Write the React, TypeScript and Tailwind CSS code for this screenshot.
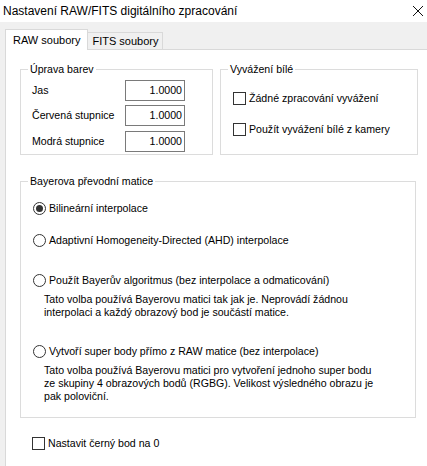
import type { ReactNode } from "react";

const FONT = "font-['Liberation_Sans',Arial,sans-serif]";

function GroupBox({ label, className, children }: { label: string; className: string; children: ReactNode }) {
  return (
    <div className={`relative border border-[#dcdcdc] ${className}`}>
      <span className="absolute -top-[7px] left-[7px] bg-white px-[2px] leading-[13px]">{label}</span>
      {children}
    </div>
  );
}

function CheckBox({ label }: { label: string }) {
  return (
    <div className="flex items-center gap-[3px] h-[13px]">
      <span className="w-[13px] h-[13px] border border-[#333333] bg-white shrink-0" />
      <span className="leading-[13px] whitespace-nowrap">{label}</span>
    </div>
  );
}

function Radio({ label, checked = false }: { label: string; checked?: boolean }) {
  return (
    <div className="flex items-center gap-[3px] h-[13px]">
      <span className="w-[13px] h-[13px] rounded-full border border-[#333333] bg-white shrink-0 flex items-center justify-center">
        {checked && <span className="w-[7px] h-[7px] rounded-full bg-[#333333]" />}
      </span>
      <span className="leading-[13px] whitespace-nowrap">{label}</span>
    </div>
  );
}

function NumField({ label, value, className = "" }: { label: string; value: string; className?: string }) {
  return (
    <div className={`flex items-center h-[21px] ${className}`}>
      <span className="w-[93px] whitespace-nowrap">{label}</span>
      <div className="w-[60px] h-[21px] border border-[#7a7a7a] bg-white flex items-center justify-end pr-[2px]">
        {value}
      </div>
    </div>
  );
}

export default function App() {
  return (
    <div className={`w-[427px] h-[466px] overflow-hidden bg-white text-black text-[11px] flex flex-col ${FONT}`}>
      {/* Title bar */}
      <div className="h-[22px] shrink-0 flex items-center justify-between pl-[3px] pr-[2px] bg-white">
        <span className="text-[12px] leading-[14px] whitespace-nowrap">Nastavení RAW/FITS digitálního zpracování</span>
        <svg width="12" height="12" viewBox="0 0 12 12" className="mr-[1px]">
          <path d="M1 1 L11 11 M11 1 L1 11" stroke="#111" strokeWidth="1" fill="none" />
        </svg>
      </div>

      <div className="flex-1 bg-[#f0f0f0] pt-[6px] flex flex-col">
        {/* Tabs */}
        <div className="flex items-end pl-[5px] h-[21px] shrink-0">
          <div className="relative z-10 h-[21px] -mb-px px-[7px] bg-white border border-b-0 border-[#d9d9d9] flex items-center">
            RAW soubory
          </div>
          <div className="h-[17px] px-[4px] bg-[#f0f0f0] border-t border-r border-[#d9d9d9] flex items-center whitespace-nowrap">
            FITS soubory
          </div>
        </div>

        {/* Page */}
        <div className="flex-1 ml-[5px] bg-white border-l border-t border-[#d9d9d9] pl-[14px] pt-[19px] flex flex-col text-[10.6px]">
          <div className="flex gap-[7px]">
            <GroupBox label="Úprava barev" className="w-[193px] h-[86px] pt-[10px] pl-[11px]">
              <NumField label="Jas" value="1.0000" />
              <NumField label="Červená stupnice" value="1.0000" className="mt-[4px]" />
              <NumField label="Modrá stupnice" value="1.0000" className="mt-[5px]" />
            </GroupBox>
            <GroupBox label="Vyvážení bílé" className="w-[198px] h-[86px] pt-[22px] pl-[12px]">
              <CheckBox label="Žádné zpracování vyvážení" />
              <div className="mt-[18px]">
                <CheckBox label="Použít vyvážení bílé z kamery" />
              </div>
            </GroupBox>
          </div>

          <GroupBox label="Bayerova převodní matice" className="mt-[26px] w-[396px] h-[237px] pt-[20px] pl-[12px]">
            <Radio label="Bilineární interpolace" checked />
            <div className="mt-[19px]">
              <Radio label="Adaptivní Homogeneity-Directed (AHD) interpolace" />
            </div>
            <div className="mt-[27px]">
              <Radio label="Použít Bayerův algoritmus (bez interpolace a odmaticování)" />
            </div>
            <p className="mt-[6px] pl-[11px] leading-[13px] whitespace-nowrap">
              Tato volba používá Bayerovu matici tak jak je. Neprovádí žádnou
              <br />
              interpolaci a každý obrazový bod je součástí matice.
            </p>
            <div className="mt-[26px]">
              <Radio label="Vytvoří super body přímo z RAW matice (bez interpolace)" />
            </div>
            <p className="mt-[6px] pl-[11px] leading-[13px] whitespace-nowrap">
              Tato volba používá Bayerovu matici pro vytvoření jednoho super bodu
              <br />
              ze skupiny 4 obrazových bodů (RGBG). Velikost výsledného obrazu je
              <br />
              pak poloviční.
            </p>
          </GroupBox>

          <div className="mt-[19px] pl-[12px]">
            <CheckBox label="Nastavit černý bod na 0" />
          </div>
        </div>
      </div>
    </div>
  );
}
